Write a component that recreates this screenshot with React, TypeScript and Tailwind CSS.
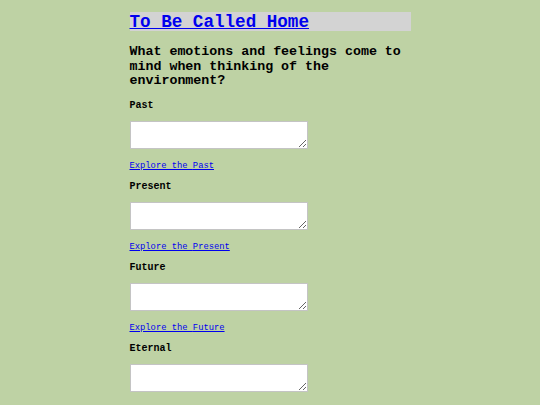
const SECTIONS = ["Past", "Present", "Future", "Eternal"];

export default function App() {
  return (
    <div className="min-h-screen bg-[#bed2a4] font-['Courier_New','Liberation_Mono',monospace] text-black">
      <div className="mx-auto w-[281px] pt-3">
        <h1 className="h-[19px] bg-[#d3d3d3] text-[17.6px] font-bold leading-[20px]">
          <a href="#" className="text-[#0000ee] underline">
            To Be Called Home
          </a>
        </h1>
        <h2 className="mt-[14px] mb-[2px] text-[13.3px] font-bold leading-[14.5px]">
          What emotions and feelings come to mind when thinking of the environment?
        </h2>
        {SECTIONS.map((s, i) => (
          <div key={s} className="flex flex-col items-start">
            <p className="mt-[9px] text-[10px] font-bold leading-[12px]">{s}</p>
            <textarea className="mt-[9px] h-[28px] w-[178px] border border-[#c4c4c4] bg-white" />
            {i < SECTIONS.length - 1 && (
              <a href="#" className="mt-[11px] text-[8.8px] leading-[12px] text-[#0000ee] underline">
                Explore the {s}
              </a>
            )}
          </div>
        ))}
      </div>
    </div>
  );
}
